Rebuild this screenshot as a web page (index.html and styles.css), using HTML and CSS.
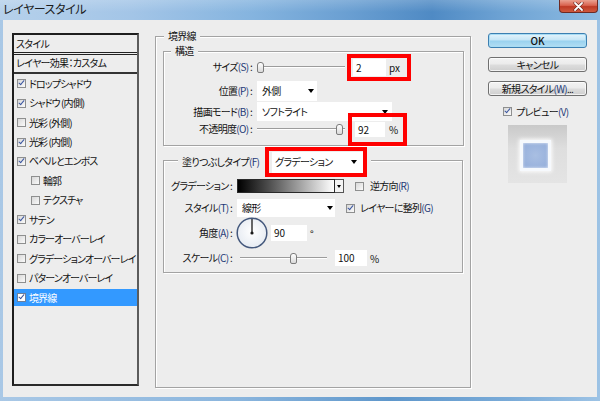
FILE: index.html
```html
<!DOCTYPE html>
<html lang="ja">
<head>
<meta charset="utf-8">
<title>レイヤースタイル</title>
<link rel="stylesheet" href="styles.css">
</head>
<body>
<div class="window">
  <div class="titlebar">
    <span class="title">レイヤースタイル</span>
    <span class="close"><svg width="11" height="9" viewBox="0 0 11 9"><path d="M2 1 L9 8 M9 1 L2 8" stroke="#5a1a14" stroke-width="3" stroke-linecap="round"/><path d="M2 1 L9 8 M9 1 L2 8" stroke="#fff" stroke-width="1.8" stroke-linecap="round"/></svg></span>
  </div>
  <div class="client">
    <div class="styles-list">
      <div class="list-head">スタイル</div>
      <div class="list-sub">レイヤー効果：カスタム</div>
      <div class="item"><span class="cb on"></span>ドロップシャドウ</div>
      <div class="item"><span class="cb on"></span>シャドウ (内側)</div>
      <div class="item"><span class="cb"></span>光彩 (外側)</div>
      <div class="item"><span class="cb on"></span>光彩 (内側)</div>
      <div class="item"><span class="cb on"></span>ベベルとエンボス</div>
      <div class="item sub"><span class="cb"></span>輪郭</div>
      <div class="item sub"><span class="cb"></span>テクスチャ</div>
      <div class="item"><span class="cb on"></span>サテン</div>
      <div class="item"><span class="cb"></span>カラーオーバーレイ</div>
      <div class="item"><span class="cb"></span>グラデーションオーバーレイ</div>
      <div class="item"><span class="cb"></span>パターンオーバーレイ</div>
      <div class="item sel"><span class="cb on"></span>境界線</div>
    </div>

    <div class="group outer">
      <div class="group-title t-outer">境界線</div>

      <div class="group g1">
        <div class="group-title t-g1">構造</div>
        <div class="row r-size">
          <span class="label">サイズ<span class="mn">(S)</span> :</span>
          <span class="slider s-size"><span class="thumb"></span></span>
          <span class="mark m-size"><span class="field f-size">2</span><span class="unit u-px">px</span></span>
        </div>
        <div class="row r-pos">
          <span class="label">位置<span class="mn">(P)</span> :</span>
          <span class="select sel-pos">外側<i class="arrow"></i></span>
        </div>
        <div class="row r-mode">
          <span class="label">描画モード<span class="mn">(B)</span> :</span>
          <span class="select sel-mode">ソフトライト<i class="arrow"></i></span>
        </div>
        <div class="row r-op">
          <span class="label">不透明度<span class="mn">(O)</span> :</span>
          <span class="slider s-op"><span class="thumb"></span></span>
          <span class="mark m-op"><span class="field f-op">92</span><span class="unit u-pct">%</span></span>
        </div>
      </div>

      <div class="group g2">
        <div class="group-title t-g2">
          <span class="fill-label">塗りつぶしタイプ<span class="mn">(F)</span></span>
          <span class="mark m-fill"><span class="select sel-fill">グラデーション<i class="arrow"></i></span></span>
        </div>
        <div class="row r-grad">
          <span class="label">グラデーション :</span>
          <span class="swatch"></span><span class="swatch-btn"><i class="arrow small"></i></span>
          <span class="cb cb-rev"></span><span class="cb-text">逆方向<span class="mn">(R)</span></span>
        </div>
        <div class="row r-style">
          <span class="label">スタイル<span class="mn">(T)</span> :</span>
          <span class="select sel-style">線形<i class="arrow"></i></span>
          <span class="cb on cb-align"></span><span class="cb-text t-align">レイヤーに整列<span class="mn">(G)</span></span>
        </div>
        <div class="row r-angle">
          <span class="label">角度<span class="mn">(A)</span> :</span>
          <svg class="dial" width="32" height="32" viewBox="0 0 32 32">
            <defs><radialGradient id="dg" cx="50%" cy="45%" r="55%"><stop offset="0" stop-color="#ffffff"/><stop offset="1" stop-color="#e6ebf2"/></radialGradient></defs>
            <circle cx="16" cy="16" r="14.8" fill="url(#dg)" stroke="#44587c" stroke-width="1.5"/>
            <line x1="16" y1="16" x2="16" y2="2" stroke="#1a1a1a" stroke-width="1.3"/>
            <circle cx="16" cy="16" r="1.6" fill="#1a1a1a"/>
          </svg>
          <span class="field f-angle">90</span><span class="unit u-deg">°</span>
        </div>
        <div class="row r-scale">
          <span class="label">スケール<span class="mn">(C)</span> :</span>
          <span class="slider s-scale"><span class="thumb"></span></span>
          <span class="field f-scale">100</span><span class="unit u-pct2">%</span>
        </div>
      </div>
    </div>

    <div class="side">
      <div class="btn default">OK</div>
      <div class="btn">キャンセル</div>
      <div class="btn">新規スタイル<span class="mn">(W)</span>...</div>
      <div class="preview-check"><span class="cb on"></span><span>プレビュー<span class="mn">(V)</span></span></div>
      <div class="preview"><div class="preview-square"></div></div>
    </div>
  </div>
</div>
</body>
</html>
```
FILE: styles.css
```css
* { box-sizing: border-box; }
html, body { margin: 0; padding: 0; }
body {
  width: 600px;
  height: 401px;
  overflow: hidden;
  font-family: "Noto Sans CJK JP", "Noto Sans", sans-serif;
  font-size: 10px;
  letter-spacing: -0.7px;
  font-feature-settings: "palt";
  color: #121212;
}
.window {
  width: 600px;
  height: 401px;
  display: flex;
  flex-direction: column;
  background: linear-gradient(90deg, #a9c8e6 0%, #8ab5dd 40%, #5f97cb 65%, #7aabd8 85%, #9dc3e5 100%);
}
.titlebar {
  height: 20px;
  flex: none;
  display: flex;
  align-items: flex-start;
  justify-content: space-between;
  background:
    linear-gradient(rgba(255,255,255,.18), rgba(255,255,255,0) 60%),
    linear-gradient(90deg, #b6d1eb 0%, #a3c5e7 22%, #85b4df 42%, #6a9fd2 58%, #4f8ac4 72%, #6ea3d4 84%, #8dbbe2 100%);
}
.title {
  font-size: 12px;
  letter-spacing: -0.4px;
  line-height: 18px;
  padding-left: 3px;
  color: #1b1b1b;
}
.close {
  width: 39px;
  height: 13px;
  margin-right: 2px;
  border: 1px solid #6d2a24;
  border-top: 0;
  border-radius: 0 0 4px 4px;
  background: linear-gradient(#eaa292, #d9634f 45%, #be3a25 55%, #cf5a3f);
  display: flex;
  align-items: center;
  justify-content: center;
}
.client {
  flex: none;
  height: 377px;
  margin: 0 3px;
  background: #ededed;
  display: flex;
  align-items: flex-start;
  padding: 13px 0 0 9px;
}

/* left list */
.styles-list {
  flex: none;
  width: 127px;
  height: 353px;
  border: 2px solid;
  border-color: #1e1e1e #5c5c5c #2a2a2a #1e1e1e;
  display: flex;
  flex-direction: column;
}
.list-head {
  height: 20px;
  line-height: 17px;
  padding-left: 2px;
  border-bottom: 3px double #222;
}
.list-sub {
  height: 19px;
  line-height: 16px;
  padding-left: 2px;
  border-bottom: 2px solid #333;
}
.item {
  height: 17.45px;
  margin: 1px 0;
  display: flex;
  align-items: center;
  gap: 3px;
  padding-left: 3px;
  white-space: nowrap;
  line-height: 14px;
  letter-spacing: -0.9px;
}
.item.sub { padding-left: 17px; }
.item.sel { background: #3399ff; color: #fff; }

.cb {
  flex: none;
  width: 9px;
  height: 9px;
  border: 1px solid #8e8f8f;
  background: linear-gradient(135deg, #d8d8d8, #fafafa);
  position: relative;
}
.item.sel .cb { background: #fff; border-color: #6d7f9a; }
.cb.on::after {
  content: "";
  position: absolute;
  left: 2px;
  top: -1px;
  width: 2px;
  height: 5px;
  border: solid #3b56a0;
  border-width: 0 1.6px 1.6px 0;
  transform: rotate(40deg);
}
.mn { color: #1f3a78; }
.item.sel .mn { color: #fff; }

/* group boxes */
.group {
  border: 1px solid #a3a3a3;
  box-shadow: inset 1px 1px 0 #fff, 1px 1px 0 #fff;
}
.group-title {
  display: table;
  padding: 0 4px;
  line-height: 12px;
  background: #ededed;
}
.outer {
  flex: none;
  width: 316px;
  height: 352px;
  margin: 3px 0 0 16px;
  padding: 0 7px;
}
.t-outer { margin: -7px 0 0 1px; }
.g1 {
  width: 301px;
  height: 95px;
  margin-top: 9px;
}
.t-g1 { margin: -7px 0 0 7px; }
.g2 {
  width: 300px;
  height: 113px;
  margin-top: 14px;
}
.t-g2 {
  display: flex;
  align-items: center;
  height: 30px;
  width: max-content;
  margin: -14px 0 0 14px;
}
.fill-label { width: 83px; white-space: nowrap; }

.row { display: flex; align-items: center; white-space: nowrap; }
.label { flex: none; text-align: right; padding-right: 5px; line-height: 14px; }
.g1 .label { width: 93px; }
.g2 .label { width: 73px; }

.r-size { height: 20px; }
.r-pos { height: 20px; margin-top: 4px; }
.r-mode { height: 19px; margin-top: 1px; }
.r-op { height: 16px; }
.r-grad { height: 16px; margin-top: 1px; }
.r-style { height: 18px; margin-top: 5px; }
.r-angle { height: 32px; }
.r-scale { height: 16px; margin-top: 1px; }

/* sliders */
.slider {
  flex: none;
  display: flex;
  align-items: center;
  height: 12px;
  background:
    linear-gradient(#9c9c9c, #9c9c9c) 0 5px / 100% 1px no-repeat,
    linear-gradient(#fff, #fff) 0 6px / 100% 1px no-repeat;
}
.thumb {
  width: 7px;
  height: 11px;
  border: 1px solid #7c7c7c;
  border-radius: 3px 3px 2px 2px;
  background: linear-gradient(#ffffff, #d9d9d9);
}
.s-size { width: 88px; }
.s-op { width: 88px; }
.s-op .thumb { margin-left: 79px; }
.s-scale { width: 87px; margin-left: 3px; }
.s-scale .thumb { margin-left: 50px; }

/* annotation boxes */
.mark {
  flex: none;
  display: flex;
  align-items: center;
  border: 4px solid #ff0000;
}
.m-size { width: 64px; height: 27px; margin-left: 2px; padding-left: 2px; }
.m-op { width: 59px; height: 33px; margin-left: 3px; padding-left: 3px; }
.m-fill { width: 102px; height: 30px; padding-left: 3px; }

.field {
  flex: none;
  background: #fff;
  padding-left: 3px;
  line-height: 15px;
  letter-spacing: 0;
}
.f-size { width: 33px; height: 17px; line-height: 17px; }
.f-op { width: 30px; height: 15px; }
.f-angle { width: 36px; height: 16px; line-height: 16px; margin-left: 3px; }
.f-scale { width: 32px; height: 16px; line-height: 16px; margin-left: 8px; }
.unit { flex: none; letter-spacing: 0; }
.u-px { margin-left: 3px; }
.u-pct { margin-left: 4px; }
.u-deg { margin-left: 3px; }
.u-pct2 { margin-left: 3px; }

/* selects */
.select {
  flex: none;
  display: flex;
  align-items: center;
  justify-content: space-between;
  background: #fff;
  padding: 0 3px 0 5px;
  line-height: 14px;
}
.sel-pos { width: 60px; height: 20px; }
.sel-mode { width: 135px; height: 19px; padding-right: 4px; }
.sel-fill { width: 91px; height: 21px; padding: 0 6px 0 3px; }
.sel-style { width: 98px; height: 18px; padding: 0 2px 0 5px; }
.arrow {
  width: 0;
  height: 0;
  border-left: 3.5px solid transparent;
  border-right: 3.5px solid transparent;
  border-top: 4px solid #000;
}
.arrow.small {
  border-left-width: 2.5px;
  border-right-width: 2.5px;
  border-top-width: 3px;
}

/* gradient swatch */
.swatch {
  flex: none;
  width: 98px;
  height: 14px;
  border: 1px solid #2a2a2a;
  background: linear-gradient(90deg, #000 0%, #555 35%, #fff 100%);
}
.swatch-btn {
  flex: none;
  width: 9px;
  height: 14px;
  border: 1px solid #555;
  border-left: 0;
  background: #f4f4f4;
  display: flex;
  align-items: center;
  justify-content: center;
}
.cb-rev { margin-left: 11px; }
.cb-align { margin-left: 11px; }
.cb-text { margin-left: 6px; line-height: 14px; }
.t-align { margin-left: 5px; }
.dial { flex: none; margin-left: -1px; }

/* right column */
.side {
  flex: none;
  width: 99px;
  margin-left: 17px;
  display: flex;
  flex-direction: column;
}
.btn {
  height: 15px;
  margin-bottom: 9px;
  border: 1px solid #707070;
  border-radius: 3px;
  background: linear-gradient(#f3f3f3, #ebebeb 48%, #dddddd 52%, #cfcfcf);
  box-shadow: inset 0 0 0 1px rgba(255,255,255,.7);
  text-align: center;
  line-height: 13px;
}
.btn.default {
  border-color: #3c7fb1;
  background: linear-gradient(#e5f4fc, #c4e5f6 48%, #98d1ef 52%, #b3def3);
  box-shadow: inset 0 0 0 1px #a8dcf4;
  font-weight: 500;
  letter-spacing: 0;
}
.preview-check {
  display: flex;
  align-items: center;
  gap: 4px;
  height: 11px;
  margin: 1px 0 0 15px;
  line-height: 14px;
}
.preview {
  width: 59px;
  height: 58px;
  margin: 8px 0 0 20px;
  background: linear-gradient(#c9c9c9, #dedede 40%, #e4e4e4);
  padding: 15px 0 0 12px;
}
.preview-square {
  width: 31px;
  height: 31px;
  border: 3px solid #f6f9fd;
  background: radial-gradient(circle at 50% 50%, #a9bfe2, #93addb);
  box-shadow: 0 0 4px 1px rgba(255,255,255,.95), inset 0 0 3px rgba(255,255,255,.8);
}
```
